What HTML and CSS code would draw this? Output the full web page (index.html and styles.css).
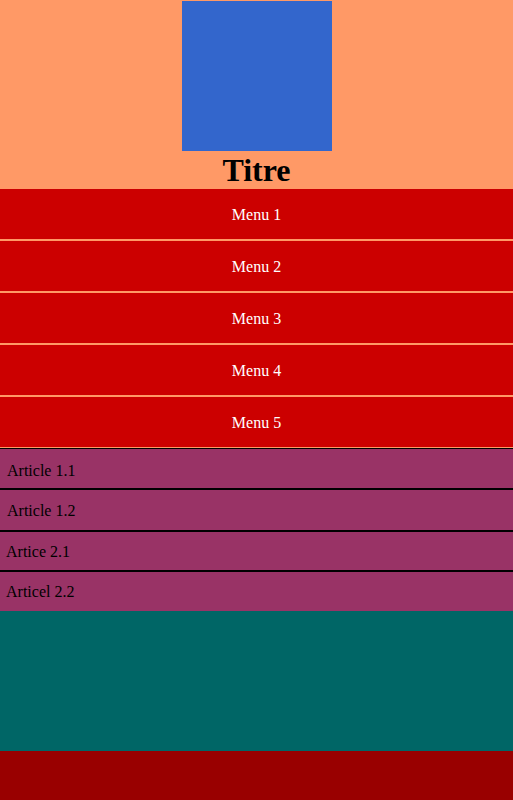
FILE: index.html
```html
<!DOCTYPE html>
<html lang="fr">
<head>
<meta charset="utf-8">
<title>Titre</title>
<link rel="stylesheet" href="styles.css">
</head>
<body>
<header class="header">
  <div class="logo"></div>
  <h1 class="title">Titre</h1>
</header>
<nav class="menu">
  <div class="menu-item">Menu 1</div>
  <div class="menu-item">Menu 2</div>
  <div class="menu-item">Menu 3</div>
  <div class="menu-item">Menu 4</div>
  <div class="menu-item menu-last">Menu 5</div>
</nav>
<main class="articles">
  <section class="group group-1">
    <div class="article a1">Article 1.1</div>
    <div class="article a2">Article 1.2</div>
  </section>
  <section class="group group-2">
    <div class="article a3">Artice 2.1</div>
    <div class="article a4">Articel 2.2</div>
  </section>
</main>
<aside class="content"></aside>
<footer class="footer"></footer>
</body>
</html>
```
FILE: styles.css
```css
html, body {
  margin: 0;
  padding: 0;
}
body {
  font-family: "Liberation Serif", "Times New Roman", serif;
  font-size: 16px;
  background: #ffffff;
}
.header {
  background: #ff9966;
  padding-top: 1px;
  display: flex;
  flex-direction: column;
  align-items: center;
}
.logo {
  width: 150px;
  height: 150px;
  background: #3366cc;
}
.title {
  margin: 0;
  padding-top: 1px;
  font-size: 32px;
  font-weight: bold;
  line-height: 37px;
  height: 37px;
  color: #000;
}
.menu {
  display: flex;
  flex-direction: column;
}
.menu-item {
  height: 48px;
  padding-top: 2px;
  line-height: 48px;
  text-align: center;
  color: #ffffff;
  background: #cc0000;
  border-bottom: 2px solid #ff9966;
}
.menu-last {
  border-bottom: 1px solid #ff9966;
}
.articles {
  background: #993366;
  border-top: 1px solid #000;
}
.article {
  color: #000;
  line-height: 19px;
  height: 19px;
}
.a1 {
  padding: 12px 7px 8px;
  border-bottom: 2px solid #000;
}
.a2 {
  padding: 11px 7px 10px;
  border-bottom: 2px solid #000;
}
.a3 {
  padding: 10px 6px 9px;
  border-bottom: 2px solid #000;
}
.a4 {
  padding: 10px 6px;
}
.content {
  height: 140px;
  background: #006666;
}
.footer {
  height: 49px;
  background: #990000;
}
```
